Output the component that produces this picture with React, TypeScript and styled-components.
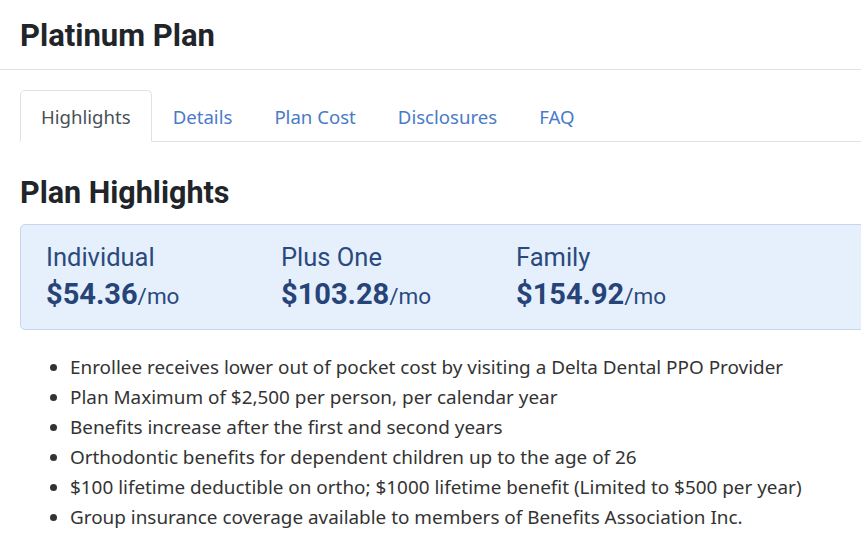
import React from 'react'
import styled, { createGlobalStyle } from 'styled-components'

const GlobalStyle = createGlobalStyle`
  html, body {
    margin: 0;
    padding: 0;
    overflow: hidden;
    background: #fff;
  }
  body {
    font-family: 'Noto Sans', 'Open Sans', sans-serif;
    color: #212529;
  }
`

const Page = styled.div`
  width: 100%;
  display: flex;
  flex-direction: column;
`

const TitleBar = styled.header`
  padding: 17px 20px 14px;
  border-bottom: 1px solid #dee2e6;
`

const Title = styled.h1`
  margin: 0;
  font: 700 31px/38px Roboto, 'DejaVu Sans', sans-serif;
  color: #212529;
`

const Body = styled.main`
  padding: 20px 0 0 20px;
  width: 960px;
`

const Tabs = styled.nav`
  display: flex;
  border-bottom: 1px solid #dee2e6;
`

const Tab = styled.a<{ active?: boolean }>`
  display: block;
  padding: 13px 20px 11px;
  margin-bottom: -1px;
  font: 400 18.6px/26px 'Noto Sans', 'Open Sans', sans-serif;
  text-decoration: none;
  color: ${({ active }) => (active ? '#495057' : '#4a7bc8')};
  background: ${({ active }) => (active ? '#fff' : 'transparent')};
  border: 1px solid ${({ active }) => (active ? '#dee2e6' : 'transparent')};
  border-bottom-color: ${({ active }) => (active ? '#fff' : 'transparent')};
  border-radius: 5px 5px 0 0;
  cursor: pointer;
`

const SectionTitle = styled.h2`
  margin: 33px 0 13px;
  font: 700 30.5px/36px Roboto, 'DejaVu Sans', sans-serif;
  color: #212529;
`

const PriceBox = styled.div`
  display: flex;
  padding: 15px 25px 16px;
  background: #e6f0fc;
  border: 1px solid #c4d7ef;
  border-radius: 5px;
`

const Price = styled.div`
  width: 235px;
  display: flex;
  flex-direction: column;
  color: #2a4a7e;
`

const PriceLabel = styled.span`
  font: 400 25.5px/35px Roboto, sans-serif;
`

const Amount = styled.span`
  font: 700 29px/38px Roboto, sans-serif;
  color: #264478;
`

const PerMonth = styled.span`
  font: 400 22.5px Roboto, sans-serif;
  color: #2a4a7e;
`

const List = styled.ul`
  margin: 22px 0 0;
  padding-left: 50px;
`

const Item = styled.li`
  font: 400 18.9px/30px 'Noto Sans', 'Open Sans', sans-serif;
  color: #333;
`

const tabs = ['Highlights', 'Details', 'Plan Cost', 'Disclosures', 'FAQ']

const prices = [
  { label: 'Individual', amount: '$54.36' },
  { label: 'Plus One', amount: '$103.28' },
  { label: 'Family', amount: '$154.92' },
]

const highlights = [
  'Enrollee receives lower out of pocket cost by visiting a Delta Dental PPO Provider',
  'Plan Maximum of $2,500 per person, per calendar year',
  'Benefits increase after the first and second years',
  'Orthodontic benefits for dependent children up to the age of 26',
  '$100 lifetime deductible on ortho; $1000 lifetime benefit (Limited to $500 per year)',
  'Group insurance coverage available to members of Benefits Association Inc.',
]

export default function App() {
  return (
    <>
      <GlobalStyle />
      <Page>
        <TitleBar>
          <Title>Platinum Plan</Title>
        </TitleBar>
        <Body>
          <Tabs>
            {tabs.map((t, i) => (
              <Tab key={t} active={i === 0}>
                {t}
              </Tab>
            ))}
          </Tabs>
          <SectionTitle>Plan Highlights</SectionTitle>
          <PriceBox>
            {prices.map((p) => (
              <Price key={p.label}>
                <PriceLabel>{p.label}</PriceLabel>
                <div>
                  <Amount>{p.amount}</Amount>
                  <PerMonth>/mo</PerMonth>
                </div>
              </Price>
            ))}
          </PriceBox>
          <List>
            {highlights.map((h) => (
              <Item key={h}>{h}</Item>
            ))}
          </List>
        </Body>
      </Page>
    </>
  )
}
